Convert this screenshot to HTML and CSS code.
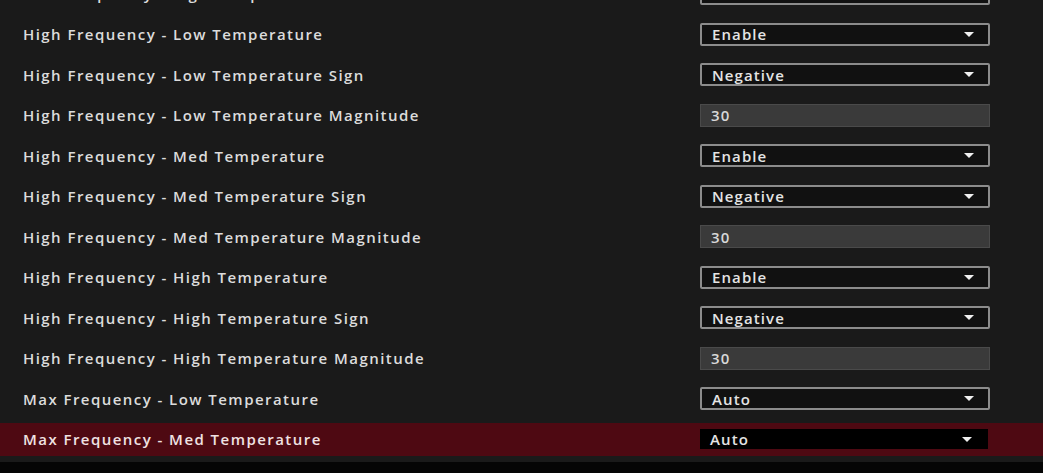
FILE: index.html
```html
<!DOCTYPE html>
<html lang="en">
<head>
  <meta charset="UTF-8">
  <title>Curve Shaper</title>
  <link rel="stylesheet" href="styles.css">
</head>
<body>
  <div class="settings">
    <div class="row">
      <span class="label">Med Frequency - High Temperature</span>
      <div class="select"><span>Auto</span><i class="caret"></i></div>
    </div>
    <div class="row">
      <span class="label">High Frequency - Low Temperature</span>
      <div class="select"><span>Enable</span><i class="caret"></i></div>
    </div>
    <div class="row">
      <span class="label">High Frequency - Low Temperature Sign</span>
      <div class="select"><span>Negative</span><i class="caret"></i></div>
    </div>
    <div class="row">
      <span class="label">High Frequency - Low Temperature Magnitude</span>
      <div class="field">30</div>
    </div>
    <div class="row">
      <span class="label">High Frequency - Med Temperature</span>
      <div class="select"><span>Enable</span><i class="caret"></i></div>
    </div>
    <div class="row">
      <span class="label">High Frequency - Med Temperature Sign</span>
      <div class="select"><span>Negative</span><i class="caret"></i></div>
    </div>
    <div class="row">
      <span class="label">High Frequency - Med Temperature Magnitude</span>
      <div class="field">30</div>
    </div>
    <div class="row">
      <span class="label">High Frequency - High Temperature</span>
      <div class="select"><span>Enable</span><i class="caret"></i></div>
    </div>
    <div class="row">
      <span class="label">High Frequency - High Temperature Sign</span>
      <div class="select"><span>Negative</span><i class="caret"></i></div>
    </div>
    <div class="row">
      <span class="label">High Frequency - High Temperature Magnitude</span>
      <div class="field">30</div>
    </div>
    <div class="row">
      <span class="label">Max Frequency - Low Temperature</span>
      <div class="select"><span>Auto</span><i class="caret"></i></div>
    </div>
    <div class="row selected">
      <span class="label">Max Frequency - Med Temperature</span>
      <div class="select"><span>Auto</span><i class="caret"></i></div>
    </div>
  </div>
  <div class="footer"></div>
</body>
</html>
```

FILE: styles.css
```css
html, body {
  height: 100%;
}
body {
  margin: 0;
  background-color: #1a1a1a;
  color: #dcdcdc;
  font-family: 'Open Sans', 'Liberation Sans', sans-serif;
  font-weight: 600;
  font-size: 15px;
  display: flex;
  flex-direction: column;
  overflow: hidden;
}
.settings {
  display: flex;
  flex-direction: column;
  gap: 7.5px;
  margin-top: -23px;
}
.row {
  display: grid;
  grid-template-columns: 677px 290px;
  align-items: center;
  height: 33px;
  padding-left: 23px;
}
.label {
  letter-spacing: 1.45px;
}
.select,
.field {
  box-sizing: border-box;
  height: 23px;
  display: flex;
  align-items: center;
  padding: 0 10px;
  letter-spacing: 1.1px;
}
.select {
  justify-content: space-between;
  border: 2px solid #8c8c8c;
  border-radius: 2px;
  background-color: #111;
  color: #e4e4e4;
}
.field {
  border: 1px solid #4a4a4a;
  background-color: #3a3a3a;
  color: #d8d8d8;
}
.caret {
  width: 0;
  height: 0;
  margin-right: 4px;
  border-left: 5px solid transparent;
  border-right: 5px solid transparent;
  border-top: 5px solid #f0f0f0;
}
.row.selected {
  background-color: #4e0912;
  color: #f0e2e2;
}
.row.selected .select {
  width: 288px;
  height: 20px;
  border: none;
  border-radius: 0;
  background-color: #000;
  padding: 0 12px 0 10px;
}
.footer {
  margin-top: 6px;
  flex: 1;
  background-color: #050505;
}
```
